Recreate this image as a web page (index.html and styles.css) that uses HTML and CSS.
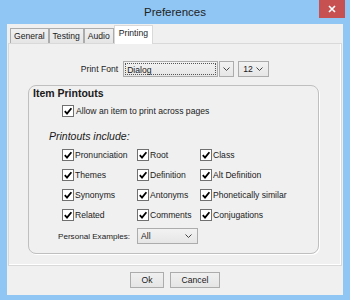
FILE: index.html
```html
<!DOCTYPE html>
<html lang="en">
<head>
    <meta charset="UTF-8">
    <title>Preferences</title>
    <link rel="stylesheet" href="styles.css">
</head>
<body>

<div class="window">
    <div class="titlebar">
        <span></span>
        <span class="title">Preferences</span>
        <span class="close">
            <svg width="8" height="8" viewBox="0 0 8 8"><path d="M1 1L7 7M7 1L1 7" stroke="#fff" stroke-width="1.6"/></svg>
        </span>
    </div>

    <div class="client">
        <div class="tabs">
            <div class="tab">General</div>
            <div class="tab">Testing</div>
            <div class="tab">Audio</div>
            <div class="tab active">Printing</div>
        </div>

        <div class="panel">
            <div class="font-row">
                <span class="label">Print Font</span>
                <div class="combo font-name"><span class="focus">Dialog</span></div>
                <div class="combo arrow-btn">
                    <svg width="7" height="4" viewBox="0 0 7 4"><polyline points="0.5,0.5 3.5,3.5 6.5,0.5" fill="none" stroke="#444"/></svg>
                </div>
                <div class="combo font-size">
                    <span>12</span>
                    <svg width="7" height="4" viewBox="0 0 7 4"><polyline points="0.5,0.5 3.5,3.5 6.5,0.5" fill="none" stroke="#444"/></svg>
                </div>
            </div>

            <div class="group">
                <div class="group-title">Item Printouts</div>
                <label class="check allow">
                    <span class="box"><svg width="10" height="10" viewBox="0 0 10 10"><path d="M1.8 5.2L4 7.6L8.4 2.2" fill="none" stroke="#000" stroke-width="1.8"/></svg></span>
                    Allow an item to print across pages
                </label>
                <div class="subhead">Printouts include:</div>
                <div class="grid" id="grid"></div>
                <div class="examples">
                    <span class="label small">Personal Examples:</span>
                    <div class="combo select">
                        <span>All</span>
                        <svg width="7" height="4" viewBox="0 0 7 4"><polyline points="0.5,0.5 3.5,3.5 6.5,0.5" fill="none" stroke="#444"/></svg>
                    </div>
                </div>
            </div>
        </div>

        <div class="buttons">
            <button class="btn ok">Ok</button>
            <button class="btn cancel">Cancel</button>
        </div>
    </div>
</div>

<script>
const items = [
    "Pronunciation", "Root", "Class",
    "Themes", "Definition", "Alt Definition",
    "Synonyms", "Antonyms", "Phonetically similar",
    "Related", "Comments", "Conjugations"
];
const tick = '<span class="box"><svg width="10" height="10" viewBox="0 0 10 10"><path d="M1.8 5.2L4 7.6L8.4 2.2" fill="none" stroke="#000" stroke-width="1.8"/></svg></span>';
document.getElementById("grid").innerHTML = items.map(name => `
    <label class="check">${tick}${name}</label>
`).join('');
</script>

</body>
</html>
```

FILE: styles.css
```css
body {
    margin: 0;
    font-family: "Liberation Sans", Arial, sans-serif;
    color: #1a1a1a;
}
.window {
    width: 350px;
    height: 300px;
    background: #90c6f4;
    display: flex;
    flex-direction: column;
}
.titlebar {
    height: 24px;
    display: grid;
    grid-template-columns: 1fr auto 1fr;
    align-items: start;
}
.title {
    font-size: 11.5px;
    line-height: 24px;
    color: #222;
}
.close {
    justify-self: end;
    width: 26px;
    height: 18px;
    margin-right: 5px;
    background: #c75050;
    display: flex;
    align-items: center;
    justify-content: center;
}
.client {
    height: 271px;
    margin: 0 7px 5px 7px;
    background: #f0f0f0;
    display: flex;
    flex-direction: column;
}
.tabs {
    display: flex;
    align-items: flex-end;
    height: 18px;
    margin: 1px 0 0 3px;
}
.tab {
    box-sizing: border-box;
    height: 15px;
    padding: 0 3px;
    border: 1px solid #acacac;
    border-bottom: none;
    background: linear-gradient(#f0f0f0, #e5e5e5);
    font-size: 8.6px;
    line-height: 14px;
}
.tab.active {
    position: relative;
    z-index: 1;
    height: 19px;
    margin-bottom: -1px;
    padding: 0 4px;
    background: #fff;
    border-color: #d9d9d9;
    line-height: 15px;
}
.panel {
    box-sizing: border-box;
    height: 223px;
    margin: 0 1px;
    padding-top: 17px;
    border: 1px solid #d9d9d9;
    box-shadow: inset -1px -1px 0 #fff;
}
.font-row {
    display: flex;
    justify-content: center;
    align-items: center;
    height: 16px;
}
.label {
    font-size: 8.6px;
}
.label.small {
    font-size: 8.1px;
}
.combo {
    box-sizing: border-box;
    height: 16px;
    border: 1px solid #acacac;
    background: linear-gradient(#f2f2f2, #e6e6e6);
    display: flex;
    align-items: center;
    font-size: 8.6px;
}
.font-name {
    width: 95px;
    margin-left: 5px;
    padding: 1px;
}
.focus {
    flex: 1;
    height: 12px;
    line-height: 12px;
    padding-left: 1px;
    border: 1px dotted #555;
    box-sizing: border-box;
}
.arrow-btn {
    width: 15px;
    margin-left: 1px;
    justify-content: center;
}
.font-size {
    width: 31px;
    margin-left: 4px;
    padding: 0 5px 0 4px;
    justify-content: space-between;
}
.group {
    box-sizing: border-box;
    height: 169px;
    margin: 8px 22px 0 19px;
    border: 1px solid #bfbfbf;
    border-radius: 8px;
    box-shadow: 1px 1px 0 #fff;
}
.group-title {
    margin: 1px 0 0 4px;
    font-size: 10.5px;
    font-weight: bold;
    line-height: 12px;
}
.check {
    display: flex;
    align-items: center;
    gap: 1px;
    height: 12px;
    font-size: 8.6px;
    white-space: nowrap;
}
.box {
    box-sizing: border-box;
    width: 12px;
    height: 12px;
    border: 1px solid #707070;
    background: #fff;
    display: flex;
    align-items: center;
    justify-content: center;
}
.allow {
    margin: 6px 0 0 33px;
    gap: 2px;
}
.subhead {
    margin: 13px 0 0 20px;
    font-size: 10.5px;
    font-style: italic;
    line-height: 13px;
}
.grid {
    display: grid;
    grid-template-columns: 75px 63px auto;
    row-gap: 8px;
    margin: 6px 0 0 33px;
}
.examples {
    display: flex;
    align-items: center;
    gap: 7px;
    margin: 7px 0 0 29px;
}
.select {
    width: 61px;
    padding: 0 5px 0 3px;
    justify-content: space-between;
}
.buttons {
    display: flex;
    justify-content: center;
    gap: 6px;
    margin-top: 6px;
}
.btn {
    box-sizing: border-box;
    height: 16px;
    padding: 0;
    border: 1px solid #acacac;
    background: linear-gradient(#f0f0f0, #e5e5e5);
    font-family: inherit;
    font-size: 8.6px;
    color: #1a1a1a;
}
.ok {
    width: 34px;
}
.cancel {
    width: 50px;
}
```
